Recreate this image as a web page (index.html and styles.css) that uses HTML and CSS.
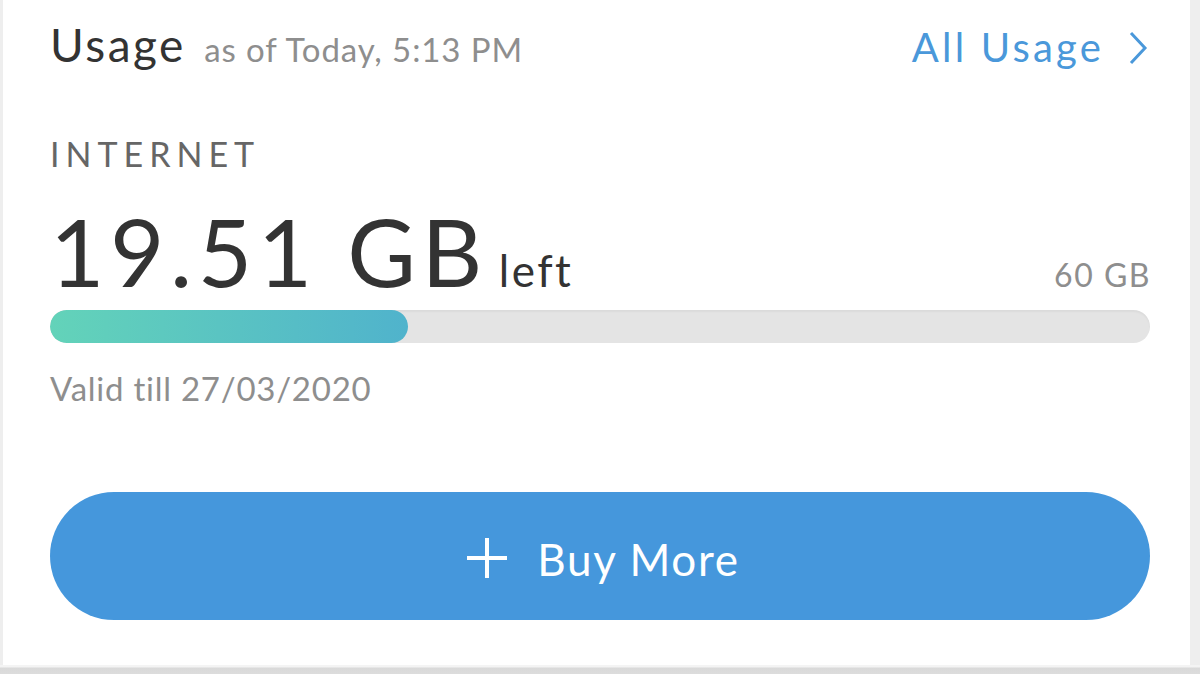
FILE: index.html
```html
<!DOCTYPE html>
<html>
  <head>
    <meta charset="utf-8">
    <title>Usage</title>
    <link rel="stylesheet" href="styles.css">
  </head>
  <body>
    <div class="card">
      <div class="card-header">
        <h2 class="title">Usage <span class="subtitle">as of Today, 5:13 PM</span></h2>
        <a class="all-link" href="#">All Usage
          <svg class="chevron" width="20" height="34" viewBox="0 0 20 34">
            <path d="M3 2 L17 17 L3 32" fill="none" stroke="#4a98da" stroke-width="3"/>
          </svg>
        </a>
      </div>

      <div class="label">INTERNET</div>

      <div class="amount-row">
        <span class="amount">19.51 GB</span>
        <span class="amount-unit">left</span>
        <span class="total">60 GB</span>
      </div>

      <div class="track">
        <div class="fill" style="width: 32.5%"></div>
      </div>

      <div class="valid">Valid till 27/03/2020</div>

      <button class="buy-btn" type="button">
        <svg class="plus" width="40" height="40" viewBox="0 0 40 40">
          <path d="M20 0 V40 M0 20 H40" stroke="#fff" stroke-width="4"/>
        </svg>
        <span>Buy More</span>
      </button>
    </div>
  </body>
</html>
```

FILE: styles.css
```css
body {
  margin: 0;
  padding: 0;
  font-family: Lato, "Open Sans", sans-serif;
  background: linear-gradient(to bottom, #eeeeee 0, #eeeeee 665px, #f4f4f4 665px, #f4f4f4 667px, #d9d9d9 668px, #dcdcdc 674px);
  height: 674px;
  overflow: hidden;
}
.card {
  box-sizing: border-box;
  margin-left: 3px;
  width: 1187px;
  height: 665px;
  background-color: #fff;
  padding: 22px 40px 0 47px;
  display: flex;
  flex-direction: column;
}
.card-header {
  display: flex;
  justify-content: space-between;
  align-items: baseline;
}
.title {
  margin: 0;
  font-size: 46px;
  font-weight: 400;
  line-height: 1;
  letter-spacing: 2.5px;
  color: #333;
}
.subtitle {
  margin-left: 4px;
  font-size: 33px;
  letter-spacing: 0.9px;
  color: #8e8e8e;
}
.all-link {
  display: flex;
  align-items: center;
  gap: 24px;
  font-size: 40px;
  line-height: 1;
  color: #4a98da;
  text-decoration: none;
  letter-spacing: 3.2px;
  margin-right: 2px;
}
.chevron {
  position: relative;
  top: 1px;
}
.label {
  margin-top: 69px;
  font-size: 34px;
  line-height: 1;
  letter-spacing: 6px;
  color: #666;
}
.amount-row {
  display: flex;
  align-items: baseline;
  margin-top: 33px;
  line-height: 1;
}
.amount {
  font-size: 94px;
  color: #333;
  letter-spacing: 5.5px;
}
.amount-unit {
  margin-left: 11px;
  font-size: 44px;
  letter-spacing: 2.5px;
  color: #333;
}
.total {
  margin-left: auto;
  font-size: 32px;
  letter-spacing: 1.5px;
  margin-right: -1px;
  color: #8e8e8e;
}
.track {
  margin-top: 12px;
  height: 33px;
  border-radius: 17px;
  background-color: #e4e4e4;
  box-shadow: inset 0 2px 2px rgba(0, 0, 0, 0.04);
  overflow: hidden;
}
.fill {
  height: 100%;
  border-radius: 17px;
  background: linear-gradient(to right, #63d3b9, #50b3cc);
}
.valid {
  margin-top: 29px;
  font-size: 33px;
  line-height: 1;
  letter-spacing: 0.75px;
  color: #8e8e8e;
}
.buy-btn {
  margin-top: 87px;
  height: 128px;
  border: none;
  border-radius: 64px;
  background-color: #4597dc;
  color: #fff;
  font-family: Lato, "Open Sans", sans-serif;
  font-size: 44px;
  letter-spacing: 1.7px;
  display: flex;
  align-items: center;
  justify-content: center;
  gap: 30px;
  padding: 6px 0 0 7px;
  cursor: pointer;
}
.plus {
  position: relative;
  top: -1px;
}
```
